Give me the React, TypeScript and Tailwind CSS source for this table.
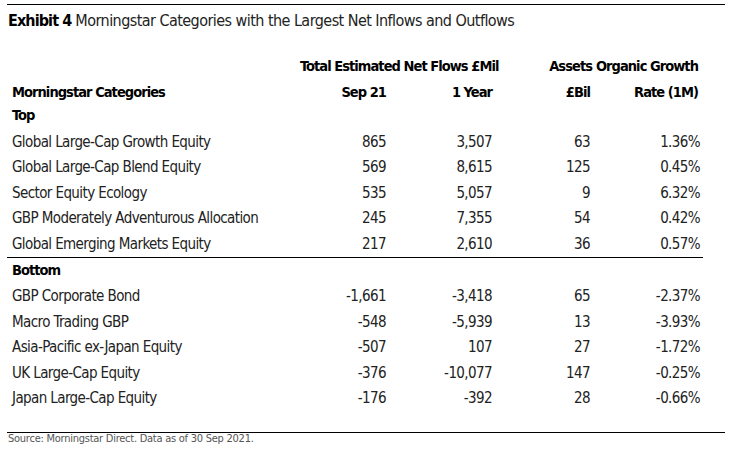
const font = { fontFamily: '"DejaVu Sans Condensed", "Liberation Sans", sans-serif' }

const topRows = [
  ['Global Large-Cap Growth Equity', '865', '3,507', '63', '1.36%'],
  ['Global Large-Cap Blend Equity', '569', '8,615', '125', '0.45%'],
  ['Sector Equity Ecology', '535', '5,057', '9', '6.32%'],
  ['GBP Moderately Adventurous Allocation', '245', '7,355', '54', '0.42%'],
  ['Global Emerging Markets Equity', '217', '2,610', '36', '0.57%'],
]

const bottomRows = [
  ['GBP Corporate Bond', '-1,661', '-3,418', '65', '-2.37%'],
  ['Macro Trading GBP', '-548', '-5,939', '13', '-3.93%'],
  ['Asia-Pacific ex-Japan Equity', '-507', '107', '27', '-1.72%'],
  ['UK Large-Cap Equity', '-376', '-10,077', '147', '-0.25%'],
  ['Japan Large-Cap Equity', '-176', '-392', '28', '-0.66%'],
]

const cols = 'grid grid-cols-[293px_86px_106px_98px_110px] items-center'

function Row({ r }: { r: string[] }) {
  return (
    <div className={`${cols} h-[25.5px] text-[15px] tracking-[-0.6px] text-[#222]`}>
      <div className="pl-[5px] whitespace-nowrap">{r[0]}</div>
      <div className="text-right">{r[1]}</div>
      <div className="text-right">{r[2]}</div>
      <div className="text-right">{r[3]}</div>
      <div className="text-right">{r[4]}</div>
    </div>
  )
}

export default function App() {
  return (
    <div className="w-[730px] h-[451px] bg-white pt-[4px] pl-[7px]" style={font}>
      <div className="w-[718px]">
        <div className="h-px bg-black" />
        <div className="h-[31px] flex items-center pl-[1px] text-[16px] tracking-[-0.55px] text-[#222] whitespace-nowrap">
          <span className="font-bold text-black tracking-[-0.9px]">Exhibit 4</span>
          <span className="ml-[4px]">Morningstar Categories with the Largest Net Inflows and Outflows</span>
        </div>
        <div className="h-[17px]" />
        <div className={`${cols} h-[27px] text-[14.5px] tracking-[-0.95px] font-bold text-black whitespace-nowrap`}>
          <div />
          <div className="col-span-2 text-right pr-[12px]">Total Estimated Net Flows £Mil</div>
          <div className="text-right -mr-[2px]">Assets</div>
          <div className="text-right pr-[2px]">Organic Growth</div>
        </div>
        <div className={`${cols} h-[26px] text-[14.5px] tracking-[-0.95px] font-bold text-black whitespace-nowrap`}>
          <div className="pl-[5px]">Morningstar Categories</div>
          <div className="text-right">Sep 21</div>
          <div className="text-right">1 Year</div>
          <div className="text-right">£Bil</div>
          <div className="text-right pr-[2px]">Rate (1M)</div>
        </div>
        <div className="h-[23px] pl-[5px] flex items-start text-[14.5px] tracking-[-0.95px] font-bold text-black leading-[18px]">Top</div>
        {topRows.map((r) => (
          <Row key={r[0]} r={r} />
        ))}
        <div className="h-px w-[696px] bg-black" />
        <div className="h-[26px] pl-[5px] flex items-center text-[14.5px] tracking-[-0.95px] font-bold text-black">Bottom</div>
        {bottomRows.map((r) => (
          <Row key={r[0]} r={r} />
        ))}
        <div className="h-[21px]" />
        <div className="h-px bg-black" />
        <div className="h-[12px] flex items-center pl-[1px] text-[11px] tracking-[-0.25px] text-[#555] whitespace-nowrap">
          Source: Morningstar Direct. Data as of 30 Sep 2021.
        </div>
      </div>
    </div>
  )
}
